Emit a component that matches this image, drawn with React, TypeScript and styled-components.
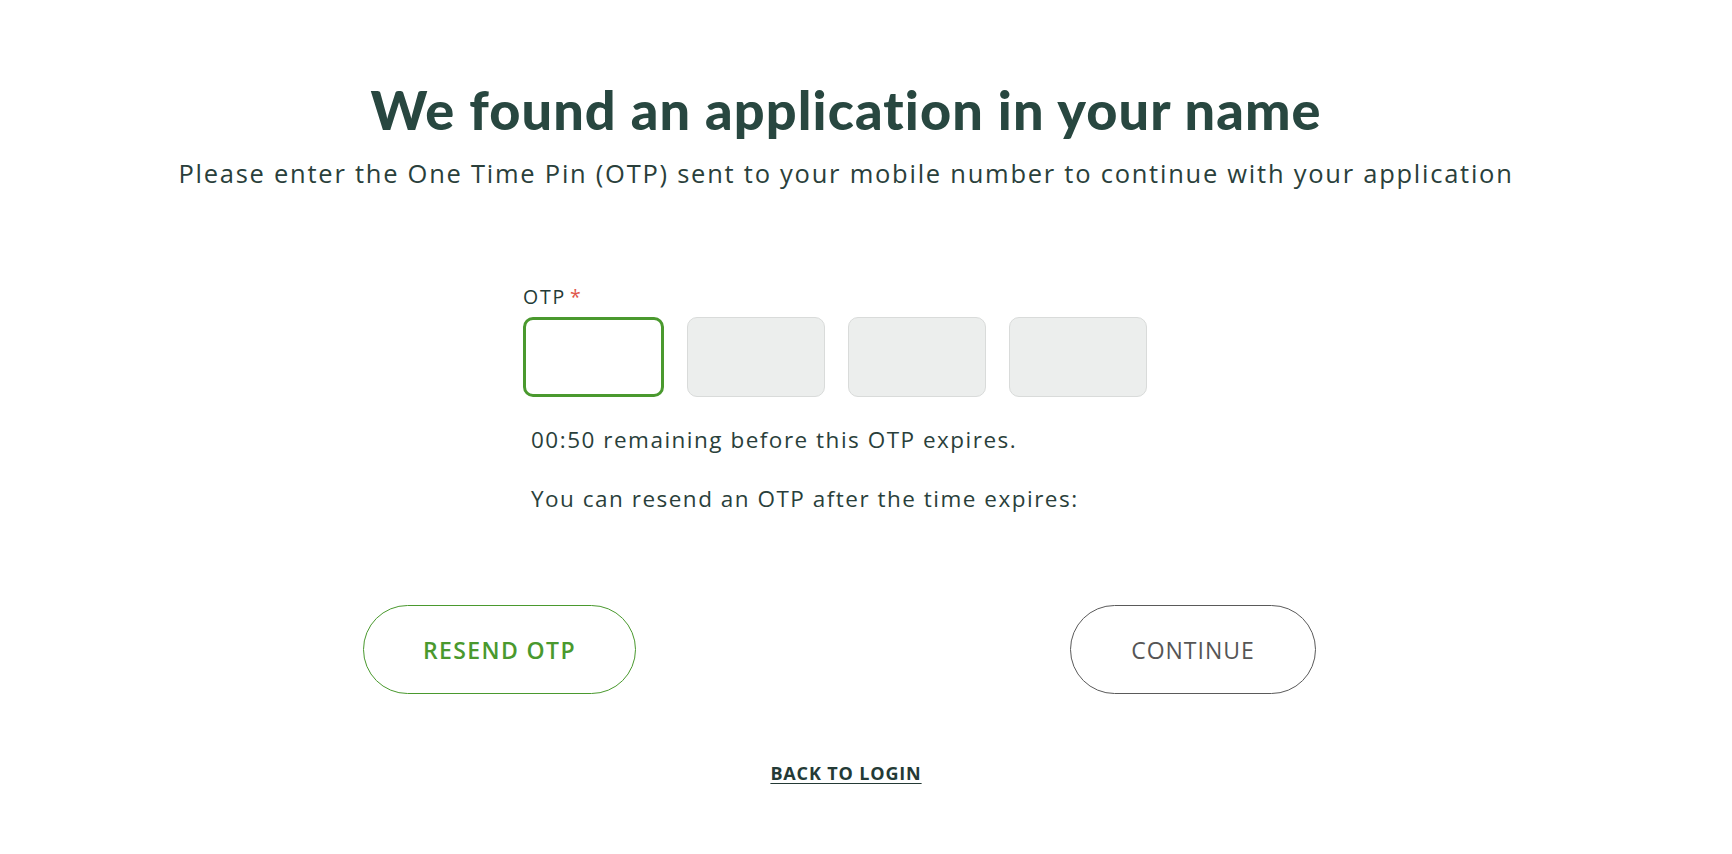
import React from "react";
import styled, { createGlobalStyle } from "styled-components";

const GlobalStyle = createGlobalStyle`
  html, body {
    margin: 0;
    padding: 0;
    background: #ffffff;
  }
  body {
    font-family: "Open Sans", "Noto Sans", sans-serif;
    color: #2a3f3b;
  }
  * { box-sizing: border-box; }
`;

const Page = styled.main`
  display: flex;
  flex-direction: column;
  align-items: center;
  padding: 78px 40px 0 0;
`;

const Title = styled.h1`
  margin: 0;
  font-family: "Lato", sans-serif;
  font-weight: 900;
  font-size: 54px;
  line-height: 64px;
  color: #284740;
  letter-spacing: 1.1px;
`;

const Subtitle = styled.p`
  margin: 16px 0 0;
  font-size: 25.5px;
  line-height: 31px;
  font-weight: 400;
  letter-spacing: 1.75px;
  color: #2a3f3b;
`;

const Form = styled.section`
  width: 646px;
  margin-top: 96px;
  display: flex;
  flex-direction: column;
`;

const Label = styled.label`
  font-size: 19.5px;
  line-height: 23px;
  letter-spacing: 1.8px;
  color: #243a36;
`;

const Required = styled.span`
  color: #e0574c;
  margin-left: 4px;
`;

const PinRow = styled.div`
  display: flex;
  gap: 23px;
  margin-top: 9px;
`;

const PinBox = styled.input<{ $active?: boolean }>`
  width: ${(p) => (p.$active ? "141px" : "138px")};
  height: 80px;
  border-radius: 10px;
  outline: none;
  font-size: 24px;
  text-align: center;
  border: ${(p) => (p.$active ? "3px solid #4a992e" : "1px solid #d9dbda")};
  background: ${(p) => (p.$active ? "#ffffff" : "#eceeed")};
`;

const Info = styled.p<{ $gap: number }>`
  margin: ${(p) => p.$gap}px 0 0;
  padding-left: 8px;
  font-size: 22.5px;
  line-height: 28px;
  letter-spacing: 1.5px;
  color: #2a3f3b;
`;

const ButtonRow = styled.div`
  width: 966px;
  margin-top: 92px;
  padding-right: 13px;
  display: flex;
  justify-content: space-between;
`;

const PillButton = styled.button<{ $variant: "green" | "gray" }>`
  height: 89px;
  border-radius: 45px;
  background: #ffffff;
  font-family: "Open Sans", sans-serif;
  font-size: 23px;
  cursor: pointer;
  border: 1px solid ${(p) => (p.$variant === "green" ? "#4a992e" : "#5a5a5a")};
  color: ${(p) => (p.$variant === "green" ? "#4a992e" : "#555555")};
  font-weight: ${(p) => (p.$variant === "green" ? 600 : 500)};
  letter-spacing: ${(p) => (p.$variant === "green" ? "1.4px" : "1px")};
  width: ${(p) => (p.$variant === "green" ? "273px" : "246px")};
`;

const BackLink = styled.a`
  margin-top: 69px;
  font-size: 18px;
  line-height: 21px;
  font-weight: 700;
  letter-spacing: 0.85px;
  color: #243a36;
  text-decoration: underline;
  text-underline-offset: 3px;
  cursor: pointer;
`;

export default function App() {
  return (
    <>
      <GlobalStyle />
      <Page>
        <Title>We found an application in your name</Title>
        <Subtitle>
          Please enter the One Time Pin (OTP) sent to your mobile number to continue with your application
        </Subtitle>
        <Form>
          <Label>
            OTP<Required>*</Required>
          </Label>
          <PinRow>
            <PinBox $active aria-label="OTP digit 1" />
            <PinBox aria-label="OTP digit 2" />
            <PinBox aria-label="OTP digit 3" />
            <PinBox aria-label="OTP digit 4" />
          </PinRow>
          <Info $gap={29}>00:50 remaining before this OTP expires.</Info>
          <Info $gap={31}>You can resend an OTP after the time expires:</Info>
        </Form>
        <ButtonRow>
          <PillButton $variant="green">RESEND OTP</PillButton>
          <PillButton $variant="gray">CONTINUE</PillButton>
        </ButtonRow>
        <BackLink>BACK TO LOGIN</BackLink>
      </Page>
    </>
  );
}
